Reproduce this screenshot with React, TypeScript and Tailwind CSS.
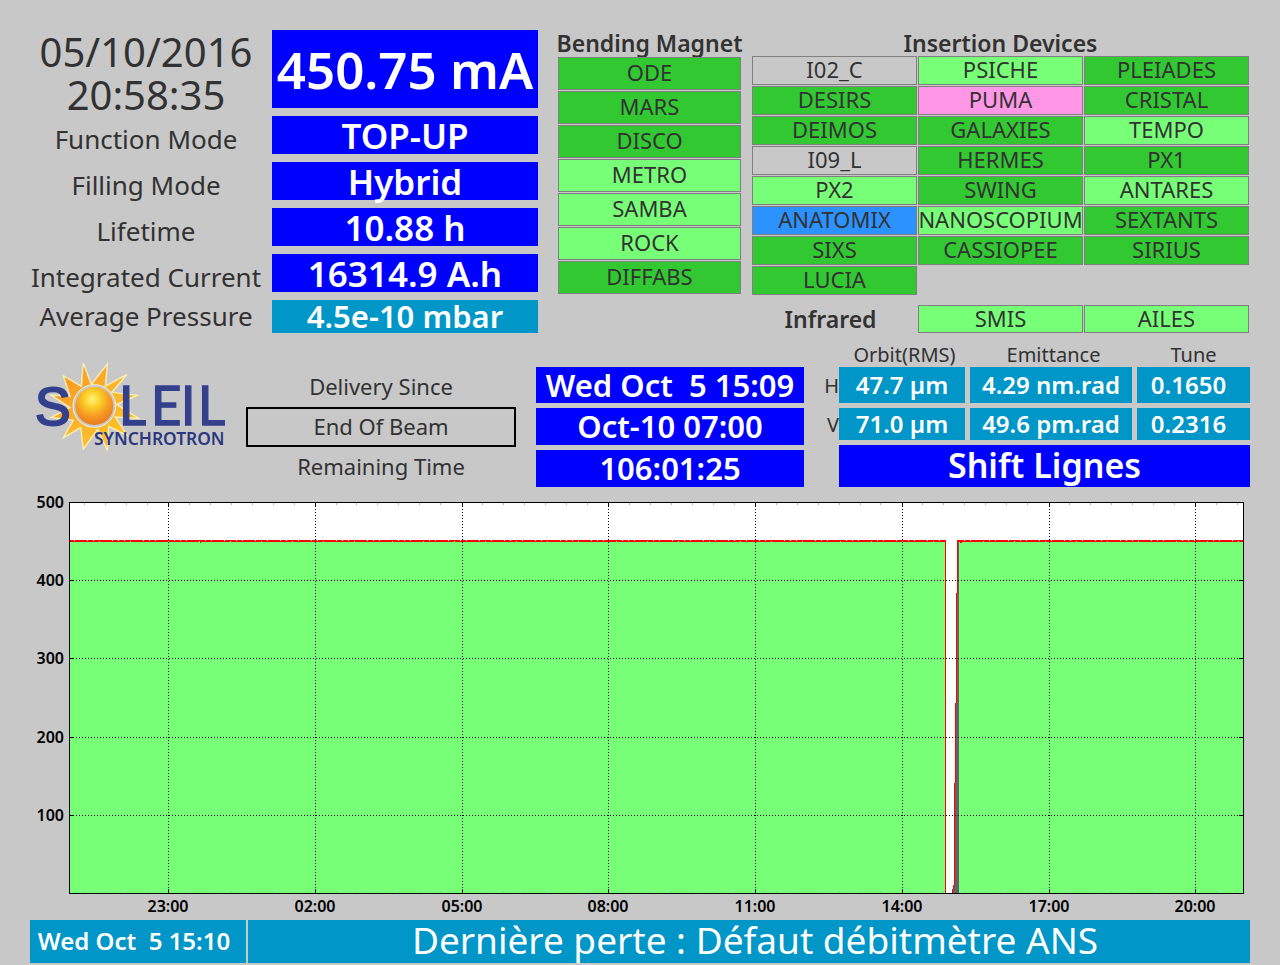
import type { ReactNode } from 'react';

type Status = 'open' | 'beam' | 'off' | 'blue' | 'pink';
type Beamline = [name: string, status: Status];

const STATUS_BG: Record<Status, string> = {
  open: 'bg-[#32c832]',
  beam: 'bg-[#78ff78]',
  off: 'bg-[#c8c8c8]',
  blue: 'bg-[#2c92ff]',
  pink: 'bg-[#ff96e6]',
};

const BENDING: Beamline[] = [
  ['ODE', 'open'],
  ['MARS', 'open'],
  ['DISCO', 'open'],
  ['METRO', 'beam'],
  ['SAMBA', 'beam'],
  ['ROCK', 'beam'],
  ['DIFFABS', 'open'],
];

const INSERTION: Beamline[] = [
  ['I02_C', 'off'], ['PSICHE', 'beam'], ['PLEIADES', 'open'],
  ['DESIRS', 'open'], ['PUMA', 'pink'], ['CRISTAL', 'open'],
  ['DEIMOS', 'open'], ['GALAXIES', 'open'], ['TEMPO', 'beam'],
  ['I09_L', 'off'], ['HERMES', 'open'], ['PX1', 'open'],
  ['PX2', 'beam'], ['SWING', 'open'], ['ANTARES', 'beam'],
  ['ANATOMIX', 'blue'], ['NANOSCOPIUM', 'beam'], ['SEXTANTS', 'open'],
  ['SIXS', 'open'], ['CASSIOPEE', 'open'], ['SIRIUS', 'open'],
  ['LUCIA', 'open'],
];

const center = 'flex items-center justify-center whitespace-pre';

function Tile({ line, height }: { line: Beamline; height: string }) {
  return (
    <li className={`${center} ${height} ${STATUS_BG[line[1]]} border border-[#808080] pb-[3px] text-[22px] leading-none`}>
      {line[0]}
    </li>
  );
}

function Value({ children, className }: { children: ReactNode; className: string }) {
  return <div className={`${center} font-semibold leading-none text-white ${className}`}>{children}</div>;
}

function Machine() {
  const clock = `${center} h-[43px] text-[40px] leading-none`;
  const label = `${center} h-[46px] text-[26px] leading-none`;
  return (
    <section className="grid grid-cols-[242fr_266fr]">
      <div className="flex flex-col pr-[10px]">
        <div className={clock}>05/10/2016</div>
        <div className={clock}>20:58:35</div>
        <div className={label}>Function Mode</div>
        <div className={label}>Filling Mode</div>
        <div className={label}>Lifetime</div>
        <div className={label}>Integrated Current</div>
        <div className={`${center} h-[33px] pb-[2px] text-[26px] leading-none`}>Average Pressure</div>
      </div>
      <div className="flex flex-col gap-2">
        <Value className="h-[78px] bg-[#0000ff] text-[51px]">450.75 mA</Value>
        <Value className="h-[38px] bg-[#0000ff] text-[35px]">TOP-UP</Value>
        <Value className="h-[38px] bg-[#0000ff] text-[35px]">Hybrid</Value>
        <Value className="h-[38px] bg-[#0000ff] text-[35px]">10.88 h</Value>
        <Value className="h-[38px] bg-[#0000ff] text-[35px]">16314.9 A.h</Value>
        <Value className="h-[33px] bg-[#0096c8] text-[31px]">4.5e-10 mbar</Value>
      </div>
    </section>
  );
}

function Beamlines() {
  const heading = `${center} text-[23px] font-semibold leading-none`;
  return (
    <div className="grid grid-cols-[minmax(0,183fr)_minmax(0,498fr)] gap-[11px]">
      <section>
        <h2 className={`${heading} h-[27px]`}>Bending Magnet</h2>
        <ul className="flex flex-col gap-px">
          {BENDING.map((b) => (
            <Tile key={b[0]} line={b} height="h-[33px]" />
          ))}
        </ul>
      </section>
      <section className="pr-px">
        <h2 className={`${heading} h-[26px]`}>Insertion Devices</h2>
        <ul className="grid grid-cols-3 gap-px">
          {INSERTION.map((b) => (
            <Tile key={b[0]} line={b} height="h-[29px]" />
          ))}
        </ul>
        <div className="mt-[10px] grid grid-cols-3 gap-px">
          <h2 className={`${heading} h-7 pr-2`}>Infrared</h2>
          <ul className="col-span-2 grid grid-cols-2 gap-px">
            <Tile line={['SMIS', 'beam']} height="h-7" />
            <Tile line={['AILES', 'beam']} height="h-7" />
          </ul>
        </div>
      </section>
    </div>
  );
}

function Logo() {
  return (
    <svg className="mt-[10px] w-[206px]" viewBox="30 30 618 300" role="img" aria-label="Soleil Synchrotron">
      <defs>
        <radialGradient id="ball" cx="0.45" cy="0.32" r="0.7">
          <stop offset="0" stopColor="#fff27a" />
          <stop offset="0.3" stopColor="#fdd02a" />
          <stop offset="0.65" stopColor="#f59a22" />
          <stop offset="1" stopColor="#e87820" />
        </radialGradient>
        <linearGradient id="rays" x1="0" y1="0" x2="1" y2="1">
          <stop offset="0" stopColor="#f58a1f" />
          <stop offset="0.5" stopColor="#fbb52a" />
          <stop offset="1" stopColor="#fbc62e" />
        </linearGradient>
      </defs>
      <polygon
        points="190,54 214,119 262,57 256,124 321,88 276,142 352,151 290,178 356,220 286,216 322,272 266,244 262,316 233,253 190,312 182,248 130,278 160,226 94,217 150,188 94,150 150,154 130,92 184,124"
        fill="url(#rays)"
        stroke="#fff0b0"
        strokeWidth="4"
      />
      <circle cx="223" cy="183" r="64" fill="#c8c8c8" stroke="#f4f0dc" strokeWidth="3" />
      <circle cx="223" cy="183" r="57" fill="url(#ball)" />
      <g fill="#34408c" stroke="#34408c" fontFamily="Lato, sans-serif" fontSize="160" fontWeight="400">
        <text x="45" y="240" fontFamily="Liberation Sans, sans-serif" strokeWidth="6">S</text>
        <text x="296" y="241" strokeWidth="4">L</text>
        <text x="392" y="241" strokeWidth="4">E</text>
        <text x="482" y="241" strokeWidth="4">I</text>
        <text x="533" y="241" strokeWidth="4">L</text>
      </g>
      <text x="222" y="300" fill="#2c3780" fontFamily="Noto Sans, sans-serif" fontSize="52" fontWeight="600">
        SYNCHROTRON
      </text>
    </svg>
  );
}

function Delivery() {
  return (
    <>
      <div className="flex flex-col pr-5 pt-[22px] text-[22px] leading-none">
        <div className={`${center} h-10 pb-[2px]`}>Delivery Since</div>
        <div className={`${center} h-10 border-2 border-black pb-[2px]`}>End Of Beam</div>
        <div className={`${center} h-10 pb-[2px]`}>Remaining Time</div>
      </div>
      <div className="flex flex-col gap-[5px] pt-[22px]">
        <Value className="h-9 bg-[#0000ff] text-[31px]">{'Wed Oct  5 15:09'}</Value>
        <Value className="h-[37px] bg-[#0000ff] text-[31px]">Oct-10 07:00</Value>
        <Value className="h-[37px] bg-[#0000ff] text-[31px]">106:01:25</Value>
      </div>
    </>
  );
}

function Optics() {
  const rows = [
    { axis: 'H', height: 'h-9', values: ['47.7 µm', '4.29 nm.rad', '0.1650'] },
    { axis: 'V', height: 'h-8', values: ['71.0 µm', '49.6 pm.rad', '0.2316'] },
  ];
  return (
    <section className="pl-5">
      <table className="w-full table-fixed border-separate border-spacing-0">
        <colgroup>
          <col className="w-[15px]" />
          <col className="w-[131px]" />
          <col className="w-[167px]" />
          <col className="w-[113px]" />
        </colgroup>
        <thead>
          <tr className="h-[22px] text-[20px] leading-none">
            <td className="p-0" />
            <th scope="col" className="p-0 pb-[2px] font-normal">Orbit(RMS)</th>
            <th scope="col" className="p-0 pb-[2px] font-normal">Emittance</th>
            <th scope="col" className="p-0 pb-[2px] font-normal">Tune</th>
          </tr>
        </thead>
        <tbody>
          {rows.map((r) => (
            <tr key={r.axis}>
              <th scope="row" className="p-0 pb-[3px] text-right text-[20px] font-normal leading-none">{r.axis}</th>
              {r.values.map((v, i) => (
                <td key={v} className={i < 2 ? 'p-0 pb-[5px] pr-[5px]' : 'p-0 pb-[5px]'}>
                  <Value className={`bg-[#0096c8] text-[24px] ${r.height} ${i === 2 ? 'pr-[10px]' : ''}`}>{v}</Value>
                </td>
              ))}
            </tr>
          ))}
        </tbody>
      </table>
      <Value className="ml-[15px] h-[42px] bg-[#0000ff] pb-[2px] text-[34px]">Shift Lignes</Value>
    </section>
  );
}

const HOURS: [x: number, label: string][] = [
  [168, '23:00'], [315, '02:00'], [462, '05:00'], [608, '08:00'],
  [755, '11:00'], [902, '14:00'], [1049, '17:00'], [1195, '20:00'],
];
const LEVELS: [y: number, label: string][] = [
  [502, '500'], [580, '400'], [658, '300'], [737, '200'], [815, '100'],
];
const MINOR = Array.from({ length: 56 }, (_, i) => 84 + Math.round(i * 20.96)).filter(
  (x) => !HOURS.some(([h]) => Math.abs(h - x) < 3),
);
// Top-up ripple: single-pixel notches along the beam current trace.
const NOTCHES = Array.from({ length: 150 }, (_, i) => 74 + i * 8 + ((i * 5) % 7)).filter(
  (x) => x < 943 || (x > 962 && x < 1241),
);

function CurrentChart() {
  return (
    <svg className="mt-1 block w-full" viewBox="30 491 1220 426" role="img" aria-label="Beam current over 24 hours">
      <g shapeRendering="crispEdges">
        <rect x="69" y="502" width="1175" height="392" fill="#ffffff" />
        <rect x="70" y="541" width="875" height="352" fill="#78ff78" />
        <rect x="959" y="541" width="284" height="352" fill="#78ff78" />
        <path d="M958 542h1v351h-6v-4h1v-4h1v-102h1v-80h1v-110h1z" fill="#646464" />
        <path
          d="M70 540h876v353h-1v-351h-875zM957 540h286v2h-285v51h-1v110h-1v80h-1v102h-1v4h-1v4h-1v-4h1v-4h1v-102h1v-80h1v-110h1z"
          fill="#ff0000"
        />
        {NOTCHES.map((x, i) => (
          <rect key={x} x={x} y={i % 4 === 3 ? 541 : 540} width="1" height="1" fill={i % 4 === 3 ? '#78ff78' : '#ffffff'} />
        ))}
        <rect x="200" y="542" width="1" height="1" fill="#ff0000" />
        <rect x="960" y="542" width="2" height="1" fill="#ff0000" />
        {MINOR.map((x) => (
          <path key={x} d={`M${x} 503h1v2h-1zM${x} 891h1v2h-1z`} fill="#b4b4b4" />
        ))}
        {HOURS.map(([x]) => (
          <g key={x} stroke="#000000">
            <path d={`M${x + 0.5} 503V893`} strokeDasharray="1 2" />
            <path d={`M${x + 0.5} 503v4M${x + 0.5} 889v4`} />
          </g>
        ))}
        {LEVELS.slice(1).map(([y]) => (
          <g key={y} stroke="#000000">
            <path d={`M70 ${y + 0.5}H1243`} strokeDasharray="1 2" />
            <path d={`M70 ${y + 0.5}h4M1239 ${y + 0.5}h4`} />
          </g>
        ))}
        <rect x="69.5" y="502.5" width="1174" height="391" fill="none" stroke="#000000" />
      </g>
      <g fill="#000000" fontFamily="Noto Sans, sans-serif" fontSize="16" fontWeight="600">
        {LEVELS.map(([y, t]) => (
          <text key={t} x="64" y={y + 6} textAnchor="end">{t}</text>
        ))}
        {HOURS.map(([x, t]) => (
          <text key={t} x={x} y="912" textAnchor="middle">{t}</text>
        ))}
      </g>
    </svg>
  );
}

export default function App() {
  return (
    <main className="min-h-screen bg-[#c8c8c8] px-[30px] pt-[30px] font-[Noto_Sans,sans-serif] text-[#323232]">
      <div className="grid grid-cols-[508fr_692fr] gap-5">
        <Machine />
        <Beamlines />
      </div>
      <div className="mt-3 grid grid-cols-[216fr_290fr_268fr_446fr]">
        <Logo />
        <Delivery />
        <Optics />
      </div>
      <CurrentChart />
      <footer className="mt-[3px] grid grid-cols-[216fr_1002fr] gap-[2px]">
        <Value className="h-[43px] bg-[#0096c8] pb-[2px] pr-2 text-[24px]">{'Wed Oct  5 15:10'}</Value>
        <div className={`${center} h-[43px] bg-[#0096c8] pb-1 pl-3 text-[37px] leading-none text-white`}>
          Dernière perte : Défaut débitmètre ANS
        </div>
      </footer>
    </main>
  );
}
